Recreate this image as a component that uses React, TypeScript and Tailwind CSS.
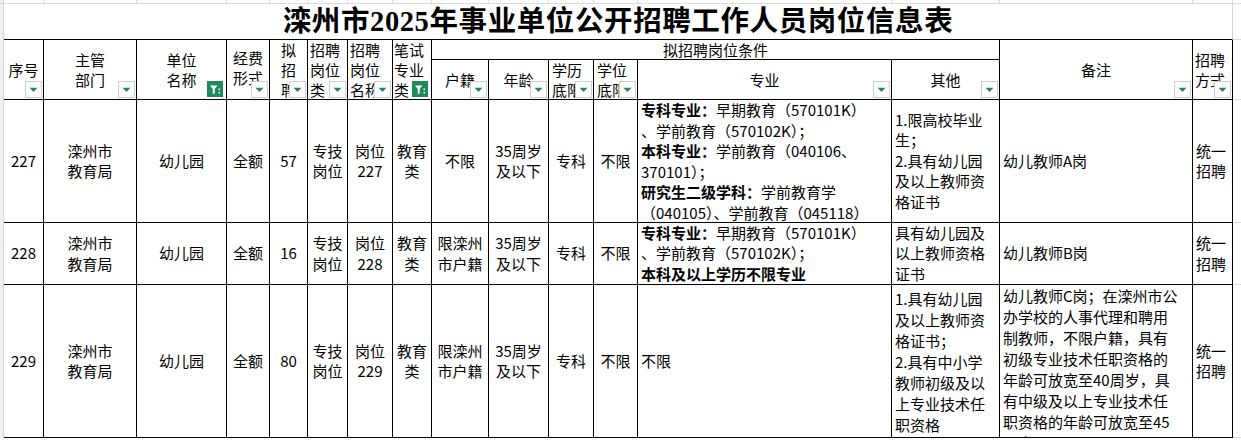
import React from "react";

const COLS =
  "grid grid-cols-[40px_93px_90px_43px_38px_40px_45px_39px_57px_60px_45px_44px_254px_108px_193px_40px]";

function Drop({ filter = false }: { filter?: boolean }) {
  if (filter) {
    return (
      <div className="absolute right-[3px] bottom-[2px] w-[16px] h-[16px] bg-[#1f8a5b] flex items-center justify-center">
        <svg width="16" height="16" viewBox="0 0 16 16">
          <path d="M3 4.5h7.5l-2.8 3.6v4.2l-1.9 1V8.1z" fill="#fff" />
          <rect x="11.5" y="7.5" width="1.6" height="1.6" fill="#fff" />
          <rect x="11.5" y="10.8" width="1.6" height="1.6" fill="#fff" />
        </svg>
      </div>
    );
  }
  return (
    <div className="absolute right-[1px] bottom-[1px] w-[17px] h-[17px] bg-white border border-[#cfcfcf] flex items-center justify-center">
      <svg width="9" height="6" viewBox="0 0 9 6">
        <path d="M0.5 0.8h8L4.5 5z" fill="#1f8a5b" />
      </svg>
    </div>
  );
}

function H({
  lines,
  filter,
  drop = true,
  cls = "",
}: {
  lines: string[];
  filter?: boolean;
  drop?: boolean;
  cls?: string;
}) {
  return (
    <div
      className={`relative border-r border-b border-black overflow-hidden flex flex-col items-center justify-center text-center leading-[20px] ${cls}`}
    >
      {lines.map((l, i) => (
        <div key={i} className="whitespace-nowrap">
          {l}
        </div>
      ))}
      {drop && <Drop filter={filter} />}
    </div>
  );
}

function C({
  lines,
  left = false,
  top = false,
  lh = "leading-[20.5px]",
  cls = "",
}: {
  lines: React.ReactNode[];
  left?: boolean;
  top?: boolean;
  lh?: string;
  cls?: string;
}) {
  return (
    <div
      className={`relative border-r border-b border-black overflow-hidden flex flex-col ${
        top ? "justify-start" : "justify-center"
      } ${left ? "items-start pl-[3px] text-left" : "items-center text-center"} ${lh} ${cls}`}
    >
      {lines.map((l, i) => (
        <div key={i} className="whitespace-nowrap">
          {l}
        </div>
      ))}
    </div>
  );
}

function Row({
  no,
  num,
  huji,
  zhuanye,
  zyLeft,
  zyTop,
  qita,
  qitaLh,
  beizhu,
  bzTop,
  bzLh,
}: {
  no: string;
  num: string;
  huji: string[];
  zhuanye: React.ReactNode[];
  zyLeft?: boolean;
  zyTop?: boolean;
  qita: string[];
  qitaLh?: string;
  beizhu: string[];
  bzTop?: boolean;
  bzLh?: string;
}) {
  return (
    <>
      <C lines={[no]} />
      <C lines={["滦州市", "教育局"]} />
      <C lines={["幼儿园"]} />
      <C lines={["全额"]} />
      <C lines={[num]} />
      <C lines={["专技", "岗位"]} />
      <C lines={["岗位", no]} />
      <C lines={["教育", "类"]} />
      <C lines={huji} />
      <C lines={["35周岁", "及以下"]} />
      <C lines={["专科"]} />
      <C lines={["不限"]} />
      <C lines={zhuanye} left={zyLeft} top={zyTop} />
      <C lines={qita} left lh={qitaLh} />
      <C lines={beizhu} left top={bzTop} lh={bzLh} />
      <C lines={["统一", "招聘"]} left />
    </>
  );
}

const B = ({ children }: { children: React.ReactNode }) => (
  <span className="font-bold">{children}</span>
);

export default function App() {
  const grayCells = Array.from({ length: 16 });
  return (
    <div className="w-[1241px] h-[440px] overflow-hidden bg-white text-black text-[15px] font-['Noto_Sans_CJK_SC',sans-serif]">
      {/* top strip (previous sheet row) */}
      <div className="flex h-[4px]">
        <div className="w-[4px] bg-[#f0f0f0] border-r border-b border-[#d4d4d4]" />
        <div className={`${COLS} grid-rows-[4px]`}>
          {grayCells.map((_, i) => (
            <div key={i} className="border-r border-b border-[#dcdcdc]" />
          ))}
        </div>
        <div className="flex-1 border-b border-[#dcdcdc]" />
      </div>

      <div className="flex">
        <div className="w-[4px] h-[434px] bg-[#f0f0f0] border-r border-[#d4d4d4]" />
        <div
          className={`${COLS} grid-rows-[36px_20px_40px_123px_62px_153px]`}
        >
          {/* title */}
          <div className="col-span-16 border-b border-black border-r border-r-[#d4d4d4] flex items-center justify-center pt-[1px]">
            <span className="text-[28.5px] font-bold leading-none tracking-[0.6px] font-['Liberation_Serif','Noto_Sans_CJK_SC',serif]">
              滦州市2025年事业单位公开招聘工作人员岗位信息表
            </span>
          </div>

          {/* header row 1 */}
          <H lines={["序号"]} cls="row-span-2" />
          <H lines={["主管", "部门"]} cls="row-span-2" />
          <H lines={["单位", "名称"]} filter cls="row-span-2" />
          <H lines={["经费", "形式"]} cls="row-span-2 pb-[4px]" />
          <H lines={["拟", "招", "聘"]} cls="row-span-2" />
          <H lines={["招聘", "岗位", "类"]} cls="row-span-2 !items-start pl-[2px]" />
          <H lines={["招聘", "岗位", "名称"]} cls="row-span-2 !items-start pl-[2px]" />
          <H lines={["笔试", "专业", "类"]} filter cls="row-span-2 !items-start pl-[1px]" />
          <H lines={["拟招聘岗位条件"]} drop={false} cls="col-span-6" />
          <H lines={["备注"]} cls="row-span-2" />
          <H lines={["招聘", "方式"]} cls="row-span-2 !items-start pl-[2px]" />

          {/* header row 2 */}
          <H lines={["户籍"]} />
          <H lines={["年龄"]} />
          <H lines={["学历", "底限"]} cls="!items-start pl-[3px]" />
          <H lines={["学位", "底限"]} cls="!items-start pl-[3px]" />
          <H lines={["专业"]} />
          <H lines={["其他"]} />

          <Row
            no="227"
            num="57"
            huji={["不限"]}
            zyLeft
            zyTop
            zhuanye={[
              <>
                <B>专科专业：</B>早期教育（570101K）
              </>,
              <>、学前教育（570102K）；</>,
              <>
                <B>本科专业：</B>学前教育（040106、
              </>,
              <>370101）；</>,
              <>
                <B>研究生二级学科：</B>学前教育学
              </>,
              <>（040105）、学前教育（045118）</>,
            ]}
            qita={["1.限高校毕业", "生；", "2.具有幼儿园", "及以上教师资", "格证书"]}
            beizhu={["幼儿教师A岗"]}
          />
          <Row
            no="228"
            num="16"
            huji={["限滦州", "市户籍"]}
            zyLeft
            zhuanye={[
              <>
                <B>专科专业：</B>早期教育（570101K）
              </>,
              <>、学前教育（570102K）；</>,
              <>
                <B>本科及以上学历不限专业</B>
              </>,
            ]}
            qita={["具有幼儿园及", "以上教师资格", "证书"]}
            beizhu={["幼儿教师B岗"]}
          />
          <Row
            no="229"
            num="80"
            huji={["限滦州", "市户籍"]}
            zyLeft
            zhuanye={["不限"]}
            qita={[
              "1.具有幼儿园",
              "及以上教师资",
              "格证书；",
              "2.具有中小学",
              "教师初级及以",
              "上专业技术任",
              "职资格",
            ]}
            qitaLh="leading-[21px]"
            beizhu={[
              "幼儿教师C岗；在滦州市公",
              "办学校的人事代理和聘用",
              "制教师，不限户籍，具有",
              "初级专业技术任职资格的",
              "年龄可放宽至40周岁，具",
              "有中级及以上专业技术任",
              "职资格的年龄可放宽至45",
              "周岁",
            ]}
            bzTop
            bzLh="leading-[21px]"
          />
        </div>
        <div className="flex-1 flex flex-col">
          <div className="h-[36px] border-b border-[#dcdcdc]" />
          <div className="h-[60px] border-b border-[#dcdcdc]" />
          <div className="h-[123px] border-b border-[#dcdcdc]" />
          <div className="h-[62px] border-b border-[#dcdcdc]" />
          <div className="h-[153px] border-b border-[#dcdcdc]" />
        </div>
      </div>
    </div>
  );
}
